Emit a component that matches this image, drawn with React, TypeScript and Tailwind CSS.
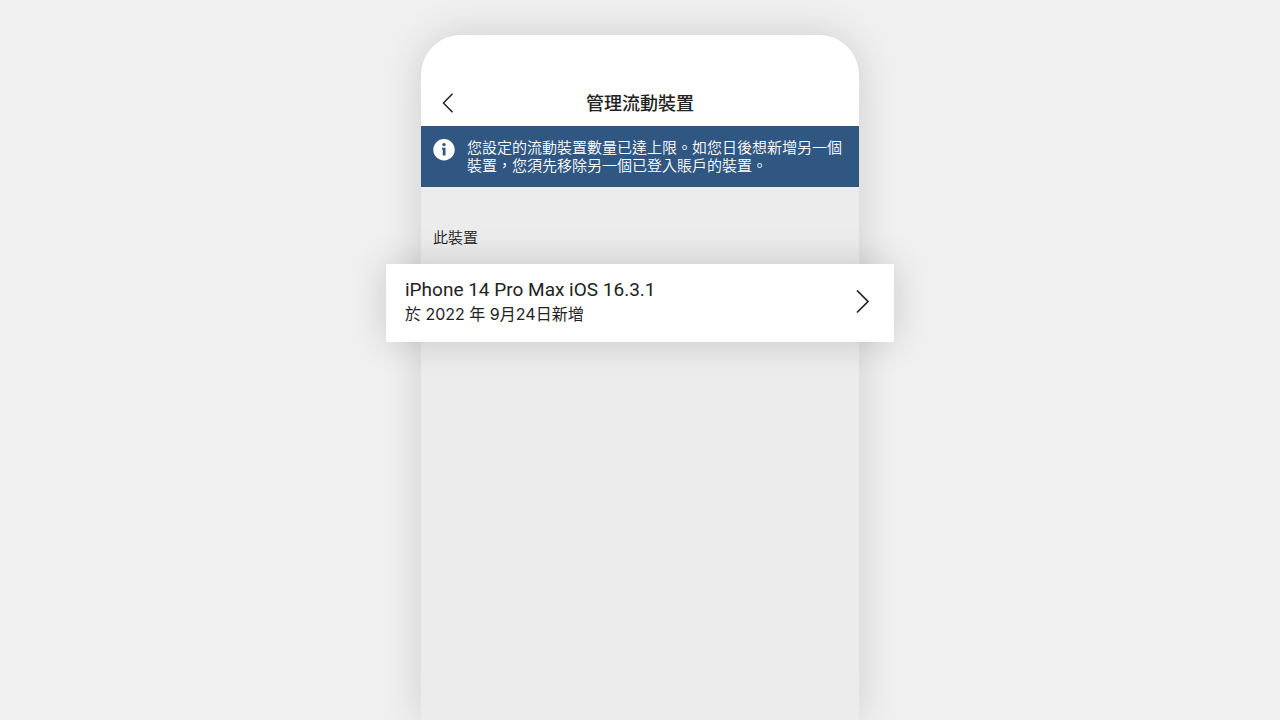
const device = {
  name: "iPhone 14 Pro Max iOS 16.3.1",
  added: "於 2022 年 9月24日新增",
};

const BackIcon = () => (
  <svg className="w-3 h-5" viewBox="0 0 12 20" fill="none" stroke="currentColor" strokeWidth="1.5" aria-hidden="true">
    <path d="M10.5 0.8 1.5 10l9 9.2" />
  </svg>
);

const ForwardIcon = () => (
  <svg className="w-3.5 h-6" viewBox="0 0 14 24" fill="none" stroke="currentColor" strokeWidth="1.7" aria-hidden="true">
    <path d="M1 0.5 12 11.5l-11 11" />
  </svg>
);

const InfoIcon = () => (
  <svg className="w-[22px] h-[22px] shrink-0" viewBox="0 0 22 22" aria-hidden="true">
    <circle cx="11" cy="10.8" r="10.7" fill="#fff" />
    <circle cx="11" cy="5.6" r="1.7" fill="#2f5782" />
    <path d="M9 8.8h3.5v7.8H9.8v-6H9z" fill="#2f5782" />
  </svg>
);

const Header = () => (
  <header className="h-[91px] pt-12 px-[21px] grid grid-cols-[40px_1fr_40px] items-start bg-white rounded-t-[40px]">
    <button type="button" aria-label="返回" className="h-10 flex items-center">
      <BackIcon />
    </button>
    <h1 className="text-lg leading-[42px] font-medium text-center">管理流動裝置</h1>
  </header>
);

const Notice = () => (
  <div role="status" className="flex gap-3 pt-[13px] pb-3 pl-3 pr-2 bg-[#2f5782] text-white">
    <InfoIcon />
    <p className="text-[15px] leading-[18px] font-[350]">
      您設定的流動裝置數量已達上限。如您日後想新增另一個裝置，您須先移除另一個已登入賬戶的裝置。
    </p>
  </div>
);

export default function App() {
  return (
    <main
      lang="zh-HK"
      className="min-h-screen pt-[35px] px-9 flex flex-col items-center bg-[#f0f0f0] text-[#222] font-['Inter','Noto_Sans_CJK_TC',sans-serif]"
    >
      <div className="w-full max-w-[438px] flex-1 bg-[#ececec] rounded-t-[40px] shadow-[0_0_40px_rgba(0,0,0,0.14)]">
        <Header />
        <Notice />
        <section>
          <h2 className="pt-[39px] pb-3.5 px-3 text-[15px] leading-6 font-[350]">此裝置</h2>
          <button
            type="button"
            className="relative -mx-[35px] w-[calc(100%+70px)] pt-3.5 pb-4 pl-[19px] pr-6 flex items-center justify-between text-left bg-white shadow-[0_0_36px_rgba(0,0,0,0.16)]"
          >
            <span>
              <span className="block text-[19px] leading-6 font-['Roboto',sans-serif]">{device.name}</span>
              <span className="block text-base leading-6">{device.added}</span>
            </span>
            <ForwardIcon />
          </button>
        </section>
      </div>
    </main>
  );
}
